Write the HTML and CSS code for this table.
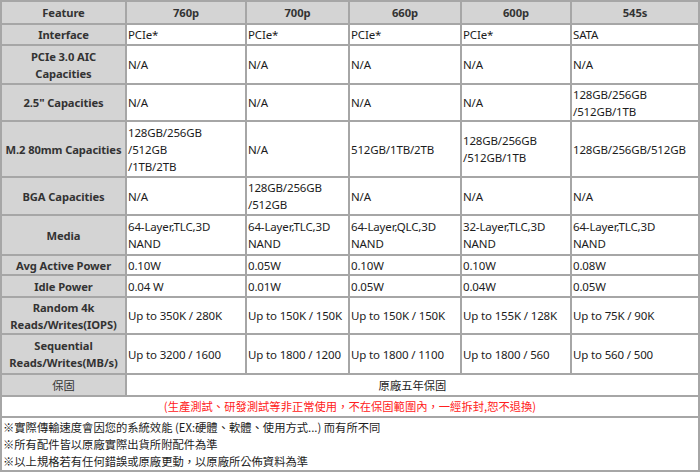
FILE: index.html
```html
<!DOCTYPE html>
<html lang="zh-Hant">
<head>
<meta charset="utf-8">
<title>SSD 規格比較</title>
<link rel="stylesheet" href="styles.css">
</head>
<body>
<table class="spec">
  <colgroup>
    <col class="c-label"><col class="c-760"><col class="c-700"><col class="c-660"><col class="c-600"><col class="c-545">
  </colgroup>
  <tr class="r-head">
    <th>Feature</th><th>760p</th><th>700p</th><th>660p</th><th>600p</th><th>545s</th>
  </tr>
  <tr class="r-21">
    <th>Interface</th><td>PCIe*</td><td>PCIe*</td><td>PCIe*</td><td>PCIe*</td><td>SATA</td>
  </tr>
  <tr class="r-39">
    <th>PCIe 3.0 AIC<br>Capacities</th><td>N/A</td><td>N/A</td><td>N/A</td><td>N/A</td><td>N/A</td>
  </tr>
  <tr class="r-37">
    <th>2.5" Capacities</th><td>N/A</td><td>N/A</td><td>N/A</td><td>N/A</td><td>128GB/256GB<br>/512GB/1TB</td>
  </tr>
  <tr class="r-56">
    <th>M.2 80mm Capacities</th><td>128GB/256GB<br>/512GB<br>/1TB/2TB</td><td>N/A</td><td>512GB/1TB/2TB</td><td>128GB/256GB<br>/512GB/1TB</td><td>128GB/256GB/512GB</td>
  </tr>
  <tr class="r-38">
    <th>BGA Capacities</th><td>N/A</td><td>128GB/256GB<br>/512GB</td><td>N/A</td><td>N/A</td><td>N/A</td>
  </tr>
  <tr class="r-40">
    <th>Media</th><td>64-Layer,TLC,3D<br>NAND</td><td>64-Layer,TLC,3D<br>NAND</td><td>64-Layer,QLC,3D<br>NAND</td><td>32-Layer,TLC,3D<br>NAND</td><td>64-Layer,TLC,3D<br>NAND</td>
  </tr>
  <tr class="r-20">
    <th>Avg Active Power</th><td>0.10W</td><td>0.05W</td><td>0.10W</td><td>0.10W</td><td>0.08W</td>
  </tr>
  <tr class="r-22">
    <th>Idle Power</th><td>0.04 W</td><td>0.01W</td><td>0.05W</td><td>0.04W</td><td>0.05W</td>
  </tr>
  <tr class="r-37">
    <th>Random 4k<br>Reads/Writes(IOPS)</th><td>Up to 350K / 280K</td><td>Up to 150K / 150K</td><td>Up to 150K / 150K</td><td>Up to 155K / 128K</td><td>Up to 75K / 90K</td>
  </tr>
  <tr class="r-40">
    <th>Sequential<br>Reads/Writes(MB/s)</th><td>Up to 3200 / 1600</td><td>Up to 1800 / 1200</td><td>Up to 1800 / 1100</td><td>Up to 1800 / 560</td><td>Up to 560 / 500</td>
  </tr>
  <tr class="r-22">
    <th class="cjk">保固</th><td colspan="5" class="center cjk">原廠五年保固</td>
  </tr>
  <tr class="r-21">
    <td colspan="6" class="center cjk warn">(生產測試、研發測試等非正常使用，不在保固範圍內，一經拆封,恕不退換)</td>
  </tr>
  <tr class="r-54">
    <td colspan="6" class="notes cjk">※實際傳輸速度會因您的系統效能 (EX:硬體、軟體、使用方式...) 而有所不同<br>※所有配件皆以原廠實際出貨所附配件為準<br>※以上規格若有任何錯誤或原廠更動，以原廠所公佈資料為準</td>
  </tr>
</table>
</body>
</html>
```

FILE: styles.css
```css
html, body {
  margin: 0;
  padding: 0;
  background: #ffffff;
}

.spec {
  width: 698px;
  table-layout: fixed;
  border-collapse: collapse;
  font-family: "Noto Sans", "Noto Sans CJK TC", sans-serif;
  font-size: 11.5px;
  letter-spacing: -0.15px;
  line-height: 17px;
  color: #1c1c1c;
}

.c-label { width: 125px; }
.c-760 { width: 120px; }
.c-700 { width: 103px; }
.c-660 { width: 112px; }
.c-600 { width: 110px; }
.c-545 { width: 128px; }

.spec th,
.spec td {
  border: 2px solid #a6a6a6;
  padding: 0 1px;
  vertical-align: middle;
  white-space: nowrap;
}

.spec th {
  background: #d4d4d4;
  color: #333333;
  font-weight: bold;
  font-size: 11.2px;
  letter-spacing: -0.1px;
  text-align: center;
}

.spec td {
  text-align: left;
}

.spec td.center { text-align: center; }

.cjk {
  font-family: "Noto Sans CJK TC", sans-serif;
  font-size: 11.3px;
  letter-spacing: 0;
}

.spec th.cjk {
  font-weight: normal;
  font-size: 11.3px;
  letter-spacing: 0;
}

.warn { color: #ff2020; }

.notes {
  vertical-align: top;
  line-height: 17px;
  padding-top: 1px;
}

.r-head { height: 23px; }
.r-20 { height: 20px; }
.r-21 { height: 21px; }
.r-22 { height: 22px; }
.r-37 { height: 37px; }
.r-38 { height: 38px; }
.r-39 { height: 39px; }
.r-40 { height: 40px; }
.r-54 { height: 54px; }
.r-56 { height: 56px; }
```
